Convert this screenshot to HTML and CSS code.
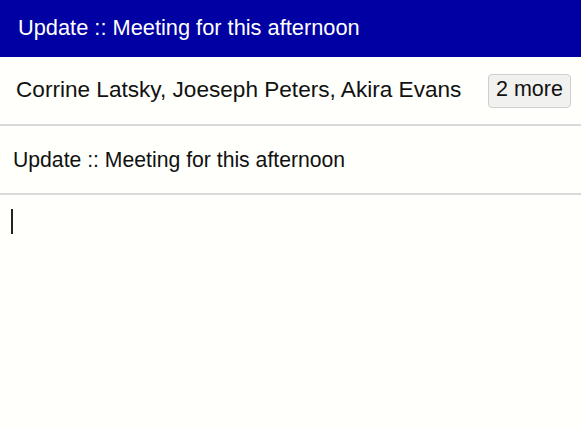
FILE: index.html
```html
<!DOCTYPE html>
<html>
<head>
<meta charset="utf-8">
<link rel="stylesheet" href="styles.css">
</head>
<body>
<div class="app">
  <header class="title-bar">Update :: Meeting for this afternoon</header>
  <div class="recipients">
    <span class="names">Corrine Latsky, Joeseph Peters, Akira Evans</span>
    <button class="more">2 more</button>
  </div>
  <div class="subject">Update :: Meeting for this afternoon</div>
  <div class="body"><span class="caret"></span></div>
</div>
</body>
</html>
```
FILE: styles.css
```css
html, body {
  margin: 0;
  padding: 0;
  background: #fffffb;
}
.app {
  width: 581px;
  height: 430px;
  font-family: "Liberation Sans", Arial, sans-serif;
  color: #111;
  display: flex;
  flex-direction: column;
}
.title-bar {
  height: 57px;
  background: #0000a3;
  color: #fff;
  font-size: 21.8px;
  display: flex;
  align-items: center;
  padding-left: 18px;
  padding-bottom: 2px;
  box-sizing: border-box;
}
.recipients {
  height: 69px;
  display: flex;
  align-items: center;
  justify-content: space-between;
  padding: 0 10px 0 16px;
  border-bottom: 2px solid #d9d9d9;
  box-sizing: border-box;
}
.names {
  font-size: 22.6px;
  padding-bottom: 2px;
}
.more {
  font-family: "Liberation Sans", Arial, sans-serif;
  font-size: 21.5px;
  color: #111;
  background: #f1f1ef;
  border: 1px solid #cfcfcf;
  border-radius: 4px;
  width: 83px;
  height: 34px;
  padding: 0 0 2px;
}
.subject {
  height: 69px;
  display: flex;
  align-items: center;
  padding-left: 13px;
  font-size: 21.2px;
  border-bottom: 2px solid #d9d9d9;
  box-sizing: border-box;
}
.body {
  flex: 1;
  padding: 14px 0 0 11px;
}
.caret {
  display: block;
  width: 2px;
  height: 25px;
  background: #222;
}
```
